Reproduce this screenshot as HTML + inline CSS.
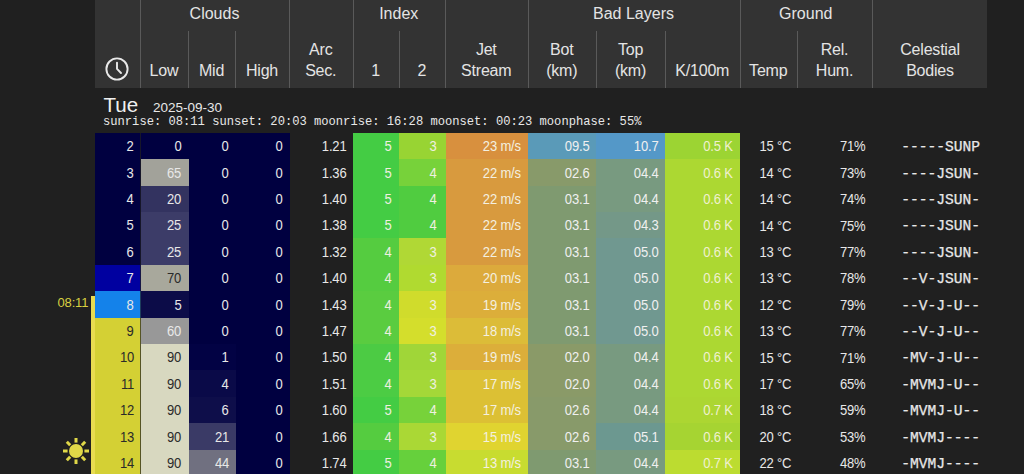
<!DOCTYPE html>
<html><head><meta charset="utf-8"><style>
html,body{margin:0;padding:0;background:#202020;width:1024px;height:474px;overflow:hidden;position:relative;font-family:"Liberation Sans",sans-serif;color:#e8e8e8}
.hdr{position:absolute;left:95px;top:0;width:892px;height:88px;background:#333333}
.hl{position:absolute;width:1px;background:#5a5a5a}
.g{position:absolute;top:0;height:28px;line-height:28px;text-align:center;font-size:16px;color:#e4e4e4}
.h{position:absolute;text-align:center;font-size:16px;letter-spacing:-0.2px;line-height:21.6px;color:#e4e4e4}
.c{position:absolute}
.t{position:absolute;height:26.41px;line-height:26.41px;text-align:right;font-size:14px;letter-spacing:-0.2px;color:#e8e8e8;white-space:nowrap}
.t span{display:inline-block;transform:scaleX(0.93);transform-origin:100% 50%}
.m{font-family:"Liberation Mono",monospace;font-size:14.6px;letter-spacing:0;-webkit-text-stroke:0.25px #e8e8e8}
.day{position:absolute;left:103.5px;top:94px;font-size:20.6px;line-height:22px;color:#f0f0f0}
.date{position:absolute;left:153px;top:100px;font-size:13.5px;line-height:16px;color:#e8e8e8}
.sun{position:absolute;left:103px;top:115px;font-family:"Liberation Mono",monospace;font-size:12.13px;line-height:14px;color:#e8e8e8;white-space:pre}
.yb{position:absolute;left:91px;top:296px;width:4px;height:180px;background:#e8dc50}
.rise{position:absolute;left:50px;top:295px;width:38.3px;text-align:right;letter-spacing:-0.15px;font-size:13px;line-height:16px;color:#d8d040}
</style></head><body>
<div class="hdr"></div>
<div class="hl" style="left:140px;top:0px;height:88px"></div><div class="hl" style="left:188px;top:31px;height:57px"></div><div class="hl" style="left:235px;top:31px;height:57px"></div><div class="hl" style="left:289px;top:0px;height:88px"></div><div class="hl" style="left:352.5px;top:0px;height:88px"></div><div class="hl" style="left:398.8px;top:31px;height:57px"></div><div class="hl" style="left:445px;top:0px;height:88px"></div><div class="hl" style="left:527.5px;top:0px;height:88px"></div><div class="hl" style="left:596px;top:31px;height:57px"></div><div class="hl" style="left:665px;top:31px;height:57px"></div><div class="hl" style="left:739.5px;top:0px;height:88px"></div><div class="hl" style="left:797px;top:31px;height:57px"></div><div class="hl" style="left:872px;top:0px;height:88px"></div>
<div class="g" style="left:140px;width:149px">Clouds</div><div class="g" style="left:352.5px;width:92.5px">Index</div><div class="g" style="left:527.5px;width:212.0px">Bad Layers</div><div class="g" style="left:739.5px;width:132.5px">Ground</div><div class="h" style="left:140px;width:48px;bottom:392px">Low</div><div class="h" style="left:188px;width:47px;bottom:392px">Mid</div><div class="h" style="left:235px;width:54px;bottom:392px">High</div><div class="h" style="left:289px;width:63.5px;bottom:392px">Arc<br>Sec.</div><div class="h" style="left:352.5px;width:46.30000000000001px;bottom:392px">1</div><div class="h" style="left:398.8px;width:46.19999999999999px;bottom:392px">2</div><div class="h" style="left:445px;width:82.5px;bottom:392px">Jet<br>Stream</div><div class="h" style="left:527.5px;width:68.5px;bottom:392px">Bot<br>(km)</div><div class="h" style="left:596px;width:69px;bottom:392px">Top<br>(km)</div><div class="h" style="left:665px;width:74.5px;bottom:392px">K/100m</div><div class="h" style="left:739.5px;width:57.5px;bottom:392px">Temp</div><div class="h" style="left:797px;width:75px;bottom:392px">Rel.<br>Hum.</div><div class="h" style="left:872px;width:116px;bottom:392px">Celestial<br>Bodies</div>
<svg width="26" height="26" viewBox="0 0 26 26" style="position:absolute;left:103.6px;top:56.2px"><circle cx="13" cy="13" r="10.6" fill="none" stroke="#e8e8e8" stroke-width="1.9"/><path d="M13 6.6 V12.8 L17 17" fill="none" stroke="#e8e8e8" stroke-width="1.9" stroke-linecap="round" stroke-linejoin="round"/></svg>
<div class="day">Tue</div><div class="date">2025-09-30</div>
<div class="sun">sunrise: 08:11 sunset: 20:03 moonrise: 16:28 moonset: 00:23 moonphase: 55%</div>
<div class="c" style="left:95px;top:132.800px;width:46.00px;height:26.810px;background:#000040"></div><div class="c" style="left:141px;top:132.800px;width:47.80px;height:26.810px;background:#000040"></div><div class="c" style="left:188.8px;top:132.800px;width:47.20px;height:26.810px;background:#000040"></div><div class="c" style="left:236px;top:132.800px;width:53.60px;height:26.810px;background:#000040"></div><div class="c" style="left:353.3px;top:132.800px;width:45.90px;height:26.810px;background:#44cc44"></div><div class="c" style="left:399.2px;top:132.800px;width:46.50px;height:26.810px;background:#98d433"></div><div class="c" style="left:445.7px;top:132.800px;width:82.30px;height:26.810px;background:#d8903e"></div><div class="c" style="left:528px;top:132.800px;width:67.80px;height:26.810px;background:#5a9ab8"></div><div class="c" style="left:595.8px;top:132.800px;width:69.60px;height:26.810px;background:#5498c8"></div><div class="c" style="left:665.4px;top:132.800px;width:74.60px;height:26.810px;background:#9cd433"></div><div class="c" style="left:95px;top:159.210px;width:46.00px;height:26.810px;background:#000040"></div><div class="c" style="left:141px;top:159.210px;width:47.80px;height:26.810px;background:#a2a29a"></div><div class="c" style="left:188.8px;top:159.210px;width:47.20px;height:26.810px;background:#000040"></div><div class="c" style="left:236px;top:159.210px;width:53.60px;height:26.810px;background:#000040"></div><div class="c" style="left:353.3px;top:159.210px;width:45.90px;height:26.810px;background:#44cc44"></div><div class="c" style="left:399.2px;top:159.210px;width:46.50px;height:26.810px;background:#77d23a"></div><div class="c" style="left:445.7px;top:159.210px;width:82.30px;height:26.810px;background:#d89a3e"></div><div class="c" style="left:528px;top:159.210px;width:67.80px;height:26.810px;background:#889a6a"></div><div class="c" style="left:595.8px;top:159.210px;width:69.60px;height:26.810px;background:#789a80"></div><div class="c" style="left:665.4px;top:159.210px;width:74.60px;height:26.810px;background:#acd832"></div><div class="c" style="left:95px;top:185.620px;width:46.00px;height:26.810px;background:#000040"></div><div class="c" style="left:141px;top:185.620px;width:47.80px;height:26.810px;background:#333360"></div><div class="c" style="left:188.8px;top:185.620px;width:47.20px;height:26.810px;background:#000040"></div><div class="c" style="left:236px;top:185.620px;width:53.60px;height:26.810px;background:#000040"></div><div class="c" style="left:353.3px;top:185.620px;width:45.90px;height:26.810px;background:#44cc44"></div><div class="c" style="left:399.2px;top:185.620px;width:46.50px;height:26.810px;background:#50cc40"></div><div class="c" style="left:445.7px;top:185.620px;width:82.30px;height:26.810px;background:#d89a3e"></div><div class="c" style="left:528px;top:185.620px;width:67.80px;height:26.810px;background:#7f9a70"></div><div class="c" style="left:595.8px;top:185.620px;width:69.60px;height:26.810px;background:#789a80"></div><div class="c" style="left:665.4px;top:185.620px;width:74.60px;height:26.810px;background:#acd832"></div><div class="c" style="left:95px;top:212.030px;width:46.00px;height:26.810px;background:#000040"></div><div class="c" style="left:141px;top:212.030px;width:47.80px;height:26.810px;background:#3c3c68"></div><div class="c" style="left:188.8px;top:212.030px;width:47.20px;height:26.810px;background:#000040"></div><div class="c" style="left:236px;top:212.030px;width:53.60px;height:26.810px;background:#000040"></div><div class="c" style="left:353.3px;top:212.030px;width:45.90px;height:26.810px;background:#44cc44"></div><div class="c" style="left:399.2px;top:212.030px;width:46.50px;height:26.810px;background:#50cc40"></div><div class="c" style="left:445.7px;top:212.030px;width:82.30px;height:26.810px;background:#d89a3e"></div><div class="c" style="left:528px;top:212.030px;width:67.80px;height:26.810px;background:#7f9a70"></div><div class="c" style="left:595.8px;top:212.030px;width:69.60px;height:26.810px;background:#749888"></div><div class="c" style="left:665.4px;top:212.030px;width:74.60px;height:26.810px;background:#acd832"></div><div class="c" style="left:95px;top:238.440px;width:46.00px;height:26.810px;background:#000040"></div><div class="c" style="left:141px;top:238.440px;width:47.80px;height:26.810px;background:#3c3c68"></div><div class="c" style="left:188.8px;top:238.440px;width:47.20px;height:26.810px;background:#000040"></div><div class="c" style="left:236px;top:238.440px;width:53.60px;height:26.810px;background:#000040"></div><div class="c" style="left:353.3px;top:238.440px;width:45.90px;height:26.810px;background:#55cc40"></div><div class="c" style="left:399.2px;top:238.440px;width:46.50px;height:26.810px;background:#b0d835"></div><div class="c" style="left:445.7px;top:238.440px;width:82.30px;height:26.810px;background:#d89a3e"></div><div class="c" style="left:528px;top:238.440px;width:67.80px;height:26.810px;background:#7f9a70"></div><div class="c" style="left:595.8px;top:238.440px;width:69.60px;height:26.810px;background:#709890"></div><div class="c" style="left:665.4px;top:238.440px;width:74.60px;height:26.810px;background:#acd832"></div><div class="c" style="left:95px;top:264.850px;width:46.00px;height:26.810px;background:#0000a0"></div><div class="c" style="left:141px;top:264.850px;width:47.80px;height:26.810px;background:#a8a89c"></div><div class="c" style="left:188.8px;top:264.850px;width:47.20px;height:26.810px;background:#000040"></div><div class="c" style="left:236px;top:264.850px;width:53.60px;height:26.810px;background:#000040"></div><div class="c" style="left:353.3px;top:264.850px;width:45.90px;height:26.810px;background:#55cc40"></div><div class="c" style="left:399.2px;top:264.850px;width:46.50px;height:26.810px;background:#b0da30"></div><div class="c" style="left:445.7px;top:264.850px;width:82.30px;height:26.810px;background:#dcaa3c"></div><div class="c" style="left:528px;top:264.850px;width:67.80px;height:26.810px;background:#7f9a70"></div><div class="c" style="left:595.8px;top:264.850px;width:69.60px;height:26.810px;background:#709890"></div><div class="c" style="left:665.4px;top:264.850px;width:74.60px;height:26.810px;background:#acd832"></div><div class="c" style="left:95px;top:291.260px;width:46.00px;height:26.810px;background:#1482ea"></div><div class="c" style="left:141px;top:291.260px;width:47.80px;height:26.810px;background:#0c0c48"></div><div class="c" style="left:188.8px;top:291.260px;width:47.20px;height:26.810px;background:#000040"></div><div class="c" style="left:236px;top:291.260px;width:53.60px;height:26.810px;background:#000040"></div><div class="c" style="left:353.3px;top:291.260px;width:45.90px;height:26.810px;background:#5acc40"></div><div class="c" style="left:399.2px;top:291.260px;width:46.50px;height:26.810px;background:#d0dc2c"></div><div class="c" style="left:445.7px;top:291.260px;width:82.30px;height:26.810px;background:#dcae3a"></div><div class="c" style="left:528px;top:291.260px;width:67.80px;height:26.810px;background:#7f9a70"></div><div class="c" style="left:595.8px;top:291.260px;width:69.60px;height:26.810px;background:#709890"></div><div class="c" style="left:665.4px;top:291.260px;width:74.60px;height:26.810px;background:#acd832"></div><div class="c" style="left:95px;top:317.670px;width:46.00px;height:26.810px;background:#d4d034"></div><div class="c" style="left:141px;top:317.670px;width:47.80px;height:26.810px;background:#989898"></div><div class="c" style="left:188.8px;top:317.670px;width:47.20px;height:26.810px;background:#000040"></div><div class="c" style="left:236px;top:317.670px;width:53.60px;height:26.810px;background:#000040"></div><div class="c" style="left:353.3px;top:317.670px;width:45.90px;height:26.810px;background:#5acc40"></div><div class="c" style="left:399.2px;top:317.670px;width:46.50px;height:26.810px;background:#d4de2c"></div><div class="c" style="left:445.7px;top:317.670px;width:82.30px;height:26.810px;background:#dcbc38"></div><div class="c" style="left:528px;top:317.670px;width:67.80px;height:26.810px;background:#7f9a70"></div><div class="c" style="left:595.8px;top:317.670px;width:69.60px;height:26.810px;background:#709890"></div><div class="c" style="left:665.4px;top:317.670px;width:74.60px;height:26.810px;background:#acd832"></div><div class="c" style="left:95px;top:344.080px;width:46.00px;height:26.810px;background:#d4d034"></div><div class="c" style="left:141px;top:344.080px;width:47.80px;height:26.810px;background:#d8d8c0"></div><div class="c" style="left:188.8px;top:344.080px;width:47.20px;height:26.810px;background:#020244"></div><div class="c" style="left:236px;top:344.080px;width:53.60px;height:26.810px;background:#000040"></div><div class="c" style="left:353.3px;top:344.080px;width:45.90px;height:26.810px;background:#4ccb44"></div><div class="c" style="left:399.2px;top:344.080px;width:46.50px;height:26.810px;background:#a0d638"></div><div class="c" style="left:445.7px;top:344.080px;width:82.30px;height:26.810px;background:#dcae3a"></div><div class="c" style="left:528px;top:344.080px;width:67.80px;height:26.810px;background:#8a9a68"></div><div class="c" style="left:595.8px;top:344.080px;width:69.60px;height:26.810px;background:#789a80"></div><div class="c" style="left:665.4px;top:344.080px;width:74.60px;height:26.810px;background:#acd832"></div><div class="c" style="left:95px;top:370.490px;width:46.00px;height:26.810px;background:#d4d034"></div><div class="c" style="left:141px;top:370.490px;width:47.80px;height:26.810px;background:#d8d8c0"></div><div class="c" style="left:188.8px;top:370.490px;width:47.20px;height:26.810px;background:#0a0a48"></div><div class="c" style="left:236px;top:370.490px;width:53.60px;height:26.810px;background:#000040"></div><div class="c" style="left:353.3px;top:370.490px;width:45.90px;height:26.810px;background:#4ccc44"></div><div class="c" style="left:399.2px;top:370.490px;width:46.50px;height:26.810px;background:#a4d838"></div><div class="c" style="left:445.7px;top:370.490px;width:82.30px;height:26.810px;background:#dcc034"></div><div class="c" style="left:528px;top:370.490px;width:67.80px;height:26.810px;background:#8a9a68"></div><div class="c" style="left:595.8px;top:370.490px;width:69.60px;height:26.810px;background:#789a80"></div><div class="c" style="left:665.4px;top:370.490px;width:74.60px;height:26.810px;background:#acd832"></div><div class="c" style="left:95px;top:396.900px;width:46.00px;height:26.810px;background:#d4d034"></div><div class="c" style="left:141px;top:396.900px;width:47.80px;height:26.810px;background:#d8d8c0"></div><div class="c" style="left:188.8px;top:396.900px;width:47.20px;height:26.810px;background:#0e0e4a"></div><div class="c" style="left:236px;top:396.900px;width:53.60px;height:26.810px;background:#000040"></div><div class="c" style="left:353.3px;top:396.900px;width:45.90px;height:26.810px;background:#44cc44"></div><div class="c" style="left:399.2px;top:396.900px;width:46.50px;height:26.810px;background:#77d23a"></div><div class="c" style="left:445.7px;top:396.900px;width:82.30px;height:26.810px;background:#dcc034"></div><div class="c" style="left:528px;top:396.900px;width:67.80px;height:26.810px;background:#889a6a"></div><div class="c" style="left:595.8px;top:396.900px;width:69.60px;height:26.810px;background:#789a80"></div><div class="c" style="left:665.4px;top:396.900px;width:74.60px;height:26.810px;background:#acd632"></div><div class="c" style="left:95px;top:423.310px;width:46.00px;height:26.810px;background:#d4d034"></div><div class="c" style="left:141px;top:423.310px;width:47.80px;height:26.810px;background:#d8d8c0"></div><div class="c" style="left:188.8px;top:423.310px;width:47.20px;height:26.810px;background:#3a3a66"></div><div class="c" style="left:236px;top:423.310px;width:53.60px;height:26.810px;background:#000040"></div><div class="c" style="left:353.3px;top:423.310px;width:45.90px;height:26.810px;background:#55cc40"></div><div class="c" style="left:399.2px;top:423.310px;width:46.50px;height:26.810px;background:#aad835"></div><div class="c" style="left:445.7px;top:423.310px;width:82.30px;height:26.810px;background:#e0d430"></div><div class="c" style="left:528px;top:423.310px;width:67.80px;height:26.810px;background:#889a6a"></div><div class="c" style="left:595.8px;top:423.310px;width:69.60px;height:26.810px;background:#6c9890"></div><div class="c" style="left:665.4px;top:423.310px;width:74.60px;height:26.810px;background:#a6d432"></div><div class="c" style="left:95px;top:449.720px;width:46.00px;height:26.810px;background:#d4d034"></div><div class="c" style="left:141px;top:449.720px;width:47.80px;height:26.810px;background:#d8d8c0"></div><div class="c" style="left:188.8px;top:449.720px;width:47.20px;height:26.810px;background:#707080"></div><div class="c" style="left:236px;top:449.720px;width:53.60px;height:26.810px;background:#000040"></div><div class="c" style="left:353.3px;top:449.720px;width:45.90px;height:26.810px;background:#44cc44"></div><div class="c" style="left:399.2px;top:449.720px;width:46.50px;height:26.810px;background:#66d03c"></div><div class="c" style="left:445.7px;top:449.720px;width:82.30px;height:26.810px;background:#c8dc30"></div><div class="c" style="left:528px;top:449.720px;width:67.80px;height:26.810px;background:#7f9a70"></div><div class="c" style="left:595.8px;top:449.720px;width:69.60px;height:26.810px;background:#789a80"></div><div class="c" style="left:665.4px;top:449.720px;width:74.60px;height:26.810px;background:#bcdc30"></div>
<div class="t" style="left:95px;top:133.100px;width:38.70px;color:#e8e8e8"><span>2</span></div><div class="t" style="left:141px;top:133.100px;width:40.50px;color:#e8e8e8"><span>0</span></div><div class="t" style="left:188.8px;top:133.100px;width:39.90px;color:#e8e8e8"><span>0</span></div><div class="t" style="left:236px;top:133.100px;width:46.30px;color:#e8e8e8"><span>0</span></div><div class="t" style="left:289.6px;top:133.100px;width:56.40px;color:#e8e8e8"><span>1.21</span></div><div class="t" style="left:353.3px;top:133.100px;width:38.60px;color:#f0f0e0"><span>5</span></div><div class="t" style="left:399.2px;top:133.100px;width:37.90px;color:#f0f0e0"><span>3</span></div><div class="t" style="left:445.7px;top:133.100px;width:75.00px;color:#f4f0e0"><span>23 m/s</span></div><div class="t" style="left:528px;top:133.100px;width:61.80px;color:#f0f0f0"><span>09.5</span></div><div class="t" style="left:595.8px;top:133.100px;width:62.30px;color:#f0f0f0"><span>10.7</span></div><div class="t" style="left:665.4px;top:133.100px;width:67.30px;color:#f0f0d0"><span>0.5 K</span></div><div class="t" style="left:740px;top:133.300px;width:51.00px"><span>15 °C</span></div><div class="t" style="left:797px;top:133.300px;width:68.50px"><span>71%</span></div><div class="t m" style="left:872px;top:134.100px;width:108.00px">-----SUNP</div><div class="t" style="left:95px;top:159.510px;width:38.70px;color:#e8e8e8"><span>3</span></div><div class="t" style="left:141px;top:159.510px;width:40.50px;color:#e8e8e8"><span>65</span></div><div class="t" style="left:188.8px;top:159.510px;width:39.90px;color:#e8e8e8"><span>0</span></div><div class="t" style="left:236px;top:159.510px;width:46.30px;color:#e8e8e8"><span>0</span></div><div class="t" style="left:289.6px;top:159.510px;width:56.40px;color:#e8e8e8"><span>1.36</span></div><div class="t" style="left:353.3px;top:159.510px;width:38.60px;color:#f0f0e0"><span>5</span></div><div class="t" style="left:399.2px;top:159.510px;width:37.90px;color:#f0f0e0"><span>4</span></div><div class="t" style="left:445.7px;top:159.510px;width:75.00px;color:#f4f0e0"><span>22 m/s</span></div><div class="t" style="left:528px;top:159.510px;width:61.80px;color:#f0f0f0"><span>02.6</span></div><div class="t" style="left:595.8px;top:159.510px;width:62.30px;color:#f0f0f0"><span>04.4</span></div><div class="t" style="left:665.4px;top:159.510px;width:67.30px;color:#f0f0d0"><span>0.6 K</span></div><div class="t" style="left:740px;top:159.710px;width:51.00px"><span>14 °C</span></div><div class="t" style="left:797px;top:159.710px;width:68.50px"><span>73%</span></div><div class="t m" style="left:872px;top:160.510px;width:108.00px">----JSUN-</div><div class="t" style="left:95px;top:185.920px;width:38.70px;color:#e8e8e8"><span>4</span></div><div class="t" style="left:141px;top:185.920px;width:40.50px;color:#e8e8e8"><span>20</span></div><div class="t" style="left:188.8px;top:185.920px;width:39.90px;color:#e8e8e8"><span>0</span></div><div class="t" style="left:236px;top:185.920px;width:46.30px;color:#e8e8e8"><span>0</span></div><div class="t" style="left:289.6px;top:185.920px;width:56.40px;color:#e8e8e8"><span>1.40</span></div><div class="t" style="left:353.3px;top:185.920px;width:38.60px;color:#f0f0e0"><span>5</span></div><div class="t" style="left:399.2px;top:185.920px;width:37.90px;color:#f0f0e0"><span>4</span></div><div class="t" style="left:445.7px;top:185.920px;width:75.00px;color:#f4f0e0"><span>22 m/s</span></div><div class="t" style="left:528px;top:185.920px;width:61.80px;color:#f0f0f0"><span>03.1</span></div><div class="t" style="left:595.8px;top:185.920px;width:62.30px;color:#f0f0f0"><span>04.4</span></div><div class="t" style="left:665.4px;top:185.920px;width:67.30px;color:#f0f0d0"><span>0.6 K</span></div><div class="t" style="left:740px;top:186.120px;width:51.00px"><span>14 °C</span></div><div class="t" style="left:797px;top:186.120px;width:68.50px"><span>74%</span></div><div class="t m" style="left:872px;top:186.920px;width:108.00px">----JSUN-</div><div class="t" style="left:95px;top:212.330px;width:38.70px;color:#e8e8e8"><span>5</span></div><div class="t" style="left:141px;top:212.330px;width:40.50px;color:#e8e8e8"><span>25</span></div><div class="t" style="left:188.8px;top:212.330px;width:39.90px;color:#e8e8e8"><span>0</span></div><div class="t" style="left:236px;top:212.330px;width:46.30px;color:#e8e8e8"><span>0</span></div><div class="t" style="left:289.6px;top:212.330px;width:56.40px;color:#e8e8e8"><span>1.38</span></div><div class="t" style="left:353.3px;top:212.330px;width:38.60px;color:#f0f0e0"><span>5</span></div><div class="t" style="left:399.2px;top:212.330px;width:37.90px;color:#f0f0e0"><span>4</span></div><div class="t" style="left:445.7px;top:212.330px;width:75.00px;color:#f4f0e0"><span>22 m/s</span></div><div class="t" style="left:528px;top:212.330px;width:61.80px;color:#f0f0f0"><span>03.1</span></div><div class="t" style="left:595.8px;top:212.330px;width:62.30px;color:#f0f0f0"><span>04.3</span></div><div class="t" style="left:665.4px;top:212.330px;width:67.30px;color:#f0f0d0"><span>0.6 K</span></div><div class="t" style="left:740px;top:212.530px;width:51.00px"><span>14 °C</span></div><div class="t" style="left:797px;top:212.530px;width:68.50px"><span>75%</span></div><div class="t m" style="left:872px;top:213.330px;width:108.00px">----JSUN-</div><div class="t" style="left:95px;top:238.740px;width:38.70px;color:#e8e8e8"><span>6</span></div><div class="t" style="left:141px;top:238.740px;width:40.50px;color:#e8e8e8"><span>25</span></div><div class="t" style="left:188.8px;top:238.740px;width:39.90px;color:#e8e8e8"><span>0</span></div><div class="t" style="left:236px;top:238.740px;width:46.30px;color:#e8e8e8"><span>0</span></div><div class="t" style="left:289.6px;top:238.740px;width:56.40px;color:#e8e8e8"><span>1.32</span></div><div class="t" style="left:353.3px;top:238.740px;width:38.60px;color:#f0f0e0"><span>4</span></div><div class="t" style="left:399.2px;top:238.740px;width:37.90px;color:#f0f0e0"><span>3</span></div><div class="t" style="left:445.7px;top:238.740px;width:75.00px;color:#f4f0e0"><span>22 m/s</span></div><div class="t" style="left:528px;top:238.740px;width:61.80px;color:#f0f0f0"><span>03.1</span></div><div class="t" style="left:595.8px;top:238.740px;width:62.30px;color:#f0f0f0"><span>05.0</span></div><div class="t" style="left:665.4px;top:238.740px;width:67.30px;color:#f0f0d0"><span>0.6 K</span></div><div class="t" style="left:740px;top:238.940px;width:51.00px"><span>13 °C</span></div><div class="t" style="left:797px;top:238.940px;width:68.50px"><span>77%</span></div><div class="t m" style="left:872px;top:239.740px;width:108.00px">----JSUN-</div><div class="t" style="left:95px;top:265.150px;width:38.70px;color:#e8e8e8"><span>7</span></div><div class="t" style="left:141px;top:265.150px;width:40.50px;color:#2a2a2a"><span>70</span></div><div class="t" style="left:188.8px;top:265.150px;width:39.90px;color:#e8e8e8"><span>0</span></div><div class="t" style="left:236px;top:265.150px;width:46.30px;color:#e8e8e8"><span>0</span></div><div class="t" style="left:289.6px;top:265.150px;width:56.40px;color:#e8e8e8"><span>1.40</span></div><div class="t" style="left:353.3px;top:265.150px;width:38.60px;color:#f0f0e0"><span>4</span></div><div class="t" style="left:399.2px;top:265.150px;width:37.90px;color:#f0f0e0"><span>3</span></div><div class="t" style="left:445.7px;top:265.150px;width:75.00px;color:#f4f0e0"><span>20 m/s</span></div><div class="t" style="left:528px;top:265.150px;width:61.80px;color:#f0f0f0"><span>03.1</span></div><div class="t" style="left:595.8px;top:265.150px;width:62.30px;color:#f0f0f0"><span>05.0</span></div><div class="t" style="left:665.4px;top:265.150px;width:67.30px;color:#f0f0d0"><span>0.6 K</span></div><div class="t" style="left:740px;top:265.350px;width:51.00px"><span>13 °C</span></div><div class="t" style="left:797px;top:265.350px;width:68.50px"><span>78%</span></div><div class="t m" style="left:872px;top:266.150px;width:108.00px">--V-JSUN-</div><div class="t" style="left:95px;top:291.560px;width:38.70px;color:#e8e8e8"><span>8</span></div><div class="t" style="left:141px;top:291.560px;width:40.50px;color:#e8e8e8"><span>5</span></div><div class="t" style="left:188.8px;top:291.560px;width:39.90px;color:#e8e8e8"><span>0</span></div><div class="t" style="left:236px;top:291.560px;width:46.30px;color:#e8e8e8"><span>0</span></div><div class="t" style="left:289.6px;top:291.560px;width:56.40px;color:#e8e8e8"><span>1.43</span></div><div class="t" style="left:353.3px;top:291.560px;width:38.60px;color:#f0f0e0"><span>4</span></div><div class="t" style="left:399.2px;top:291.560px;width:37.90px;color:#f0f0e0"><span>3</span></div><div class="t" style="left:445.7px;top:291.560px;width:75.00px;color:#f4f0e0"><span>19 m/s</span></div><div class="t" style="left:528px;top:291.560px;width:61.80px;color:#f0f0f0"><span>03.1</span></div><div class="t" style="left:595.8px;top:291.560px;width:62.30px;color:#f0f0f0"><span>05.0</span></div><div class="t" style="left:665.4px;top:291.560px;width:67.30px;color:#f0f0d0"><span>0.6 K</span></div><div class="t" style="left:740px;top:291.760px;width:51.00px"><span>12 °C</span></div><div class="t" style="left:797px;top:291.760px;width:68.50px"><span>79%</span></div><div class="t m" style="left:872px;top:292.560px;width:108.00px">--V-J-U--</div><div class="t" style="left:95px;top:317.970px;width:38.70px;color:#2a2a2a"><span>9</span></div><div class="t" style="left:141px;top:317.970px;width:40.50px;color:#e8e8e8"><span>60</span></div><div class="t" style="left:188.8px;top:317.970px;width:39.90px;color:#e8e8e8"><span>0</span></div><div class="t" style="left:236px;top:317.970px;width:46.30px;color:#e8e8e8"><span>0</span></div><div class="t" style="left:289.6px;top:317.970px;width:56.40px;color:#e8e8e8"><span>1.47</span></div><div class="t" style="left:353.3px;top:317.970px;width:38.60px;color:#f0f0e0"><span>4</span></div><div class="t" style="left:399.2px;top:317.970px;width:37.90px;color:#f0f0e0"><span>3</span></div><div class="t" style="left:445.7px;top:317.970px;width:75.00px;color:#f4f0e0"><span>18 m/s</span></div><div class="t" style="left:528px;top:317.970px;width:61.80px;color:#f0f0f0"><span>03.1</span></div><div class="t" style="left:595.8px;top:317.970px;width:62.30px;color:#f0f0f0"><span>05.0</span></div><div class="t" style="left:665.4px;top:317.970px;width:67.30px;color:#f0f0d0"><span>0.6 K</span></div><div class="t" style="left:740px;top:318.170px;width:51.00px"><span>13 °C</span></div><div class="t" style="left:797px;top:318.170px;width:68.50px"><span>77%</span></div><div class="t m" style="left:872px;top:318.970px;width:108.00px">--V-J-U--</div><div class="t" style="left:95px;top:344.380px;width:38.70px;color:#2a2a2a"><span>10</span></div><div class="t" style="left:141px;top:344.380px;width:40.50px;color:#2a2a2a"><span>90</span></div><div class="t" style="left:188.8px;top:344.380px;width:39.90px;color:#e8e8e8"><span>1</span></div><div class="t" style="left:236px;top:344.380px;width:46.30px;color:#e8e8e8"><span>0</span></div><div class="t" style="left:289.6px;top:344.380px;width:56.40px;color:#e8e8e8"><span>1.50</span></div><div class="t" style="left:353.3px;top:344.380px;width:38.60px;color:#f0f0e0"><span>4</span></div><div class="t" style="left:399.2px;top:344.380px;width:37.90px;color:#f0f0e0"><span>3</span></div><div class="t" style="left:445.7px;top:344.380px;width:75.00px;color:#f4f0e0"><span>19 m/s</span></div><div class="t" style="left:528px;top:344.380px;width:61.80px;color:#f0f0f0"><span>02.0</span></div><div class="t" style="left:595.8px;top:344.380px;width:62.30px;color:#f0f0f0"><span>04.4</span></div><div class="t" style="left:665.4px;top:344.380px;width:67.30px;color:#f0f0d0"><span>0.6 K</span></div><div class="t" style="left:740px;top:344.580px;width:51.00px"><span>15 °C</span></div><div class="t" style="left:797px;top:344.580px;width:68.50px"><span>71%</span></div><div class="t m" style="left:872px;top:345.380px;width:108.00px">-MV-J-U--</div><div class="t" style="left:95px;top:370.790px;width:38.70px;color:#2a2a2a"><span>11</span></div><div class="t" style="left:141px;top:370.790px;width:40.50px;color:#2a2a2a"><span>90</span></div><div class="t" style="left:188.8px;top:370.790px;width:39.90px;color:#e8e8e8"><span>4</span></div><div class="t" style="left:236px;top:370.790px;width:46.30px;color:#e8e8e8"><span>0</span></div><div class="t" style="left:289.6px;top:370.790px;width:56.40px;color:#e8e8e8"><span>1.51</span></div><div class="t" style="left:353.3px;top:370.790px;width:38.60px;color:#f0f0e0"><span>4</span></div><div class="t" style="left:399.2px;top:370.790px;width:37.90px;color:#f0f0e0"><span>3</span></div><div class="t" style="left:445.7px;top:370.790px;width:75.00px;color:#f4f0e0"><span>17 m/s</span></div><div class="t" style="left:528px;top:370.790px;width:61.80px;color:#f0f0f0"><span>02.0</span></div><div class="t" style="left:595.8px;top:370.790px;width:62.30px;color:#f0f0f0"><span>04.4</span></div><div class="t" style="left:665.4px;top:370.790px;width:67.30px;color:#f0f0d0"><span>0.6 K</span></div><div class="t" style="left:740px;top:370.990px;width:51.00px"><span>17 °C</span></div><div class="t" style="left:797px;top:370.990px;width:68.50px"><span>65%</span></div><div class="t m" style="left:872px;top:371.790px;width:108.00px">-MVMJ-U--</div><div class="t" style="left:95px;top:397.200px;width:38.70px;color:#2a2a2a"><span>12</span></div><div class="t" style="left:141px;top:397.200px;width:40.50px;color:#2a2a2a"><span>90</span></div><div class="t" style="left:188.8px;top:397.200px;width:39.90px;color:#e8e8e8"><span>6</span></div><div class="t" style="left:236px;top:397.200px;width:46.30px;color:#e8e8e8"><span>0</span></div><div class="t" style="left:289.6px;top:397.200px;width:56.40px;color:#e8e8e8"><span>1.60</span></div><div class="t" style="left:353.3px;top:397.200px;width:38.60px;color:#f0f0e0"><span>5</span></div><div class="t" style="left:399.2px;top:397.200px;width:37.90px;color:#f0f0e0"><span>4</span></div><div class="t" style="left:445.7px;top:397.200px;width:75.00px;color:#f4f0e0"><span>17 m/s</span></div><div class="t" style="left:528px;top:397.200px;width:61.80px;color:#f0f0f0"><span>02.6</span></div><div class="t" style="left:595.8px;top:397.200px;width:62.30px;color:#f0f0f0"><span>04.4</span></div><div class="t" style="left:665.4px;top:397.200px;width:67.30px;color:#f0f0d0"><span>0.7 K</span></div><div class="t" style="left:740px;top:397.400px;width:51.00px"><span>18 °C</span></div><div class="t" style="left:797px;top:397.400px;width:68.50px"><span>59%</span></div><div class="t m" style="left:872px;top:398.200px;width:108.00px">-MVMJ-U--</div><div class="t" style="left:95px;top:423.610px;width:38.70px;color:#2a2a2a"><span>13</span></div><div class="t" style="left:141px;top:423.610px;width:40.50px;color:#2a2a2a"><span>90</span></div><div class="t" style="left:188.8px;top:423.610px;width:39.90px;color:#e8e8e8"><span>21</span></div><div class="t" style="left:236px;top:423.610px;width:46.30px;color:#e8e8e8"><span>0</span></div><div class="t" style="left:289.6px;top:423.610px;width:56.40px;color:#e8e8e8"><span>1.66</span></div><div class="t" style="left:353.3px;top:423.610px;width:38.60px;color:#f0f0e0"><span>4</span></div><div class="t" style="left:399.2px;top:423.610px;width:37.90px;color:#f0f0e0"><span>3</span></div><div class="t" style="left:445.7px;top:423.610px;width:75.00px;color:#f4f0e0"><span>15 m/s</span></div><div class="t" style="left:528px;top:423.610px;width:61.80px;color:#f0f0f0"><span>02.6</span></div><div class="t" style="left:595.8px;top:423.610px;width:62.30px;color:#f0f0f0"><span>05.1</span></div><div class="t" style="left:665.4px;top:423.610px;width:67.30px;color:#f0f0d0"><span>0.6 K</span></div><div class="t" style="left:740px;top:423.810px;width:51.00px"><span>20 °C</span></div><div class="t" style="left:797px;top:423.810px;width:68.50px"><span>53%</span></div><div class="t m" style="left:872px;top:424.610px;width:108.00px">-MVMJ----</div><div class="t" style="left:95px;top:450.020px;width:38.70px;color:#2a2a2a"><span>14</span></div><div class="t" style="left:141px;top:450.020px;width:40.50px;color:#2a2a2a"><span>90</span></div><div class="t" style="left:188.8px;top:450.020px;width:39.90px;color:#e8e8e8"><span>44</span></div><div class="t" style="left:236px;top:450.020px;width:46.30px;color:#e8e8e8"><span>0</span></div><div class="t" style="left:289.6px;top:450.020px;width:56.40px;color:#e8e8e8"><span>1.74</span></div><div class="t" style="left:353.3px;top:450.020px;width:38.60px;color:#f0f0e0"><span>5</span></div><div class="t" style="left:399.2px;top:450.020px;width:37.90px;color:#f0f0e0"><span>4</span></div><div class="t" style="left:445.7px;top:450.020px;width:75.00px;color:#f4f0e0"><span>13 m/s</span></div><div class="t" style="left:528px;top:450.020px;width:61.80px;color:#f0f0f0"><span>03.1</span></div><div class="t" style="left:595.8px;top:450.020px;width:62.30px;color:#f0f0f0"><span>04.4</span></div><div class="t" style="left:665.4px;top:450.020px;width:67.30px;color:#f0f0d0"><span>0.7 K</span></div><div class="t" style="left:740px;top:450.220px;width:51.00px"><span>22 °C</span></div><div class="t" style="left:797px;top:450.220px;width:68.50px"><span>48%</span></div><div class="t m" style="left:872px;top:451.020px;width:108.00px">-MVMJ----</div>
<div class="yb"></div><div style="position:absolute;left:140px;top:132.8px;width:1px;height:342px;background:rgba(31,31,31,0.7)"></div>
<div class="rise">08:11</div>
<svg width="30" height="30" viewBox="0 0 30 30" style="position:absolute;left:60.6px;top:436.4px"><circle cx="15" cy="15" r="7" fill="#e0d848"/><g stroke="#e0d848" stroke-width="3" stroke-linecap="butt"><line x1="15" y1="2" x2="15" y2="6.6"/><line x1="15" y1="23.4" x2="15" y2="28"/><line x1="2" y1="15" x2="6.6" y2="15"/><line x1="23.4" y1="15" x2="28" y2="15"/><line x1="5.8" y1="5.8" x2="9.2" y2="9.2"/><line x1="20.8" y1="20.8" x2="24.2" y2="24.2"/><line x1="5.8" y1="24.2" x2="9.2" y2="20.8"/><line x1="20.8" y1="9.2" x2="24.2" y2="5.8"/></g></svg>
</body></html>
